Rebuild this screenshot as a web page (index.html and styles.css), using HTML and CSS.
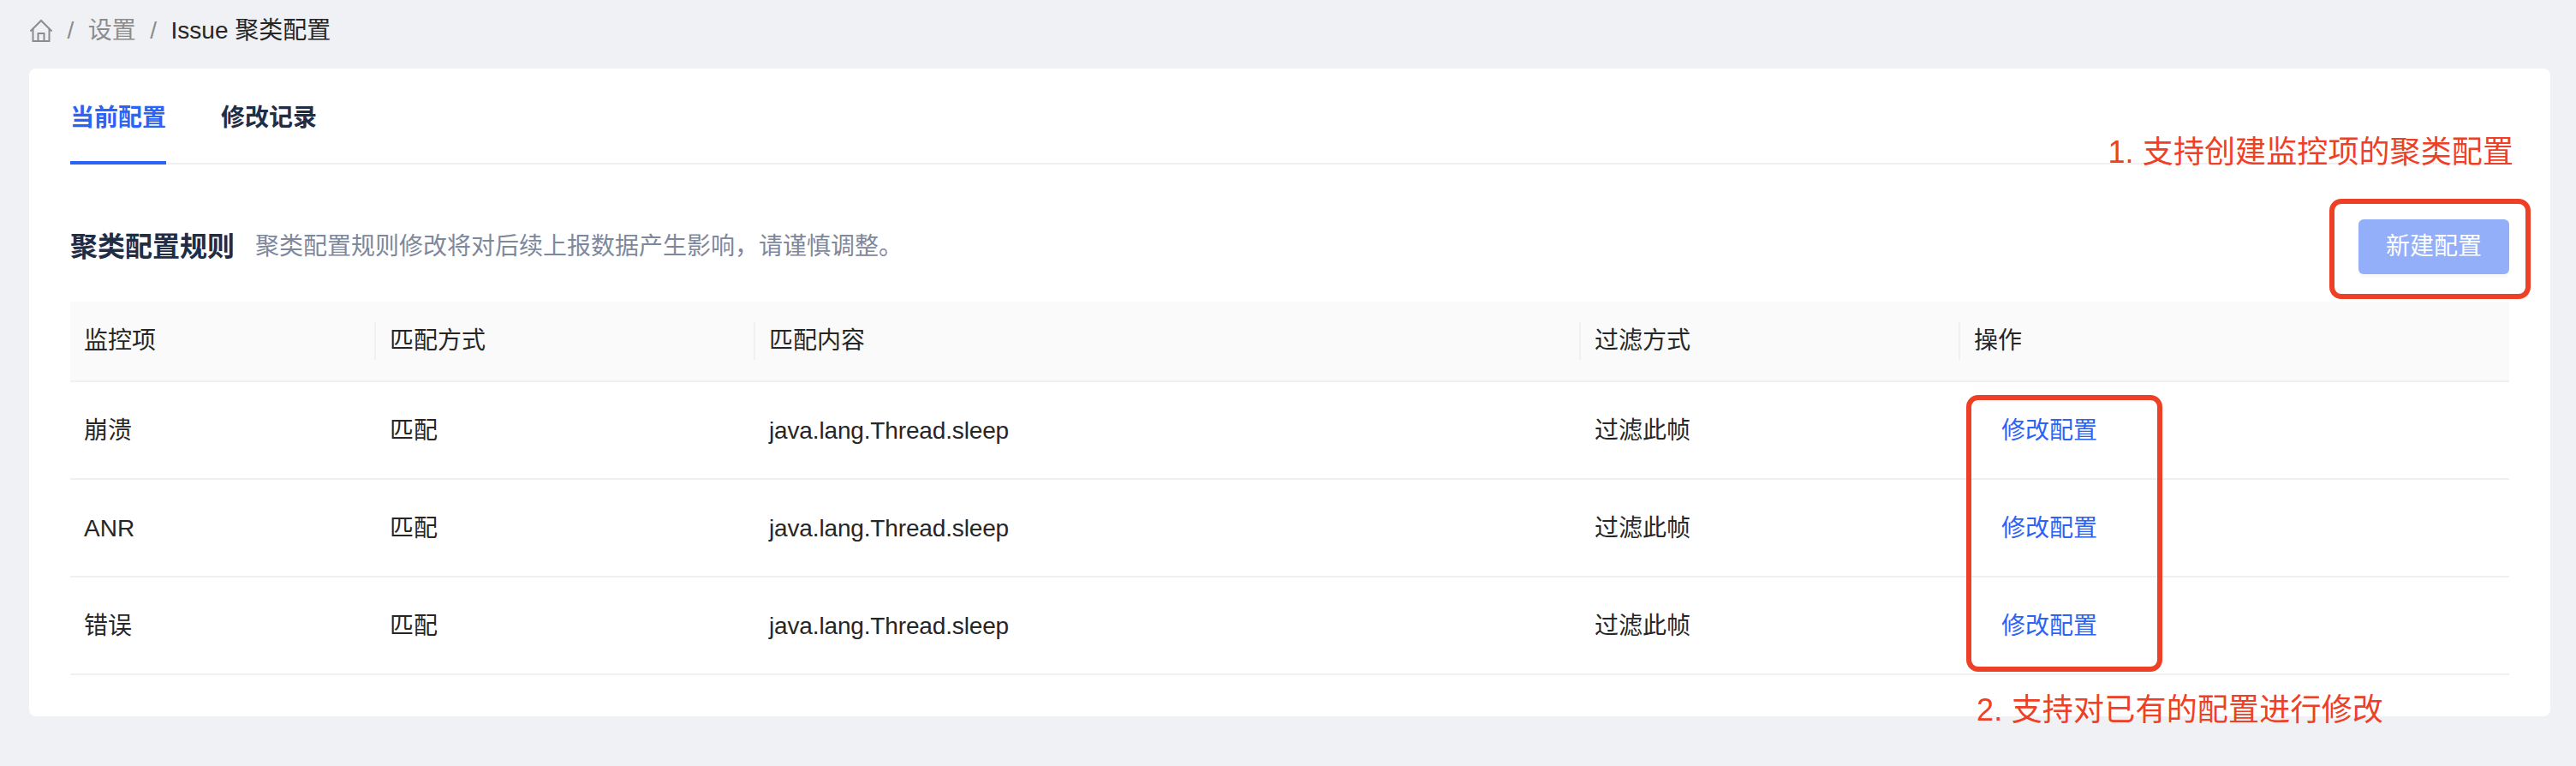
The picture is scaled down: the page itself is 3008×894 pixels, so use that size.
FILE: index.html
```html
<!DOCTYPE html>
<html lang="zh-CN">
<head>
    <meta charset="UTF-8">
    <meta name="viewport" content="width=device-width, initial-scale=1.0">
    <title>Issue 聚类配置</title>
    <link rel="stylesheet" href="styles.css">
</head>
<body>
    <div class="crumbs">
        <svg class="home" viewBox="0 0 28 28" fill="none" stroke="#8c8c8c" stroke-width="2">
            <path d="M1.5 14.5 14 2l12.5 12.5"/>
            <path d="M4.5 12v14h19V12"/>
            <path d="M10.5 26v-9h7v9"/>
        </svg>
        <span class="sep">/</span>
        <span class="crumb">设置</span>
        <span class="sep">/</span>
        <span class="crumb-now">Issue 聚类配置</span>
    </div>

    <div class="card">
        <div class="tabs">
            <div class="tab active">当前配置</div>
            <div class="tab">修改记录</div>
        </div>

        <div class="head">
            <div class="title">聚类配置规则</div>
            <div class="desc">聚类配置规则修改将对后续上报数据产生影响，请谨慎调整。</div>
            <button class="btn">新建配置</button>
        </div>

        <table class="list">
            <colgroup>
                <col class="c1"><col class="c2"><col class="c3"><col class="c4"><col class="c5">
            </colgroup>
            <thead>
                <tr>
                    <th>监控项</th>
                    <th>匹配方式</th>
                    <th>匹配内容</th>
                    <th>过滤方式</th>
                    <th>操作</th>
                </tr>
            </thead>
            <tbody>
                <tr>
                    <td>崩溃</td>
                    <td>匹配</td>
                    <td class="code">java.lang.Thread.sleep</td>
                    <td>过滤此帧</td>
                    <td><a class="link">修改配置</a></td>
                </tr>
                <tr>
                    <td>ANR</td>
                    <td>匹配</td>
                    <td class="code">java.lang.Thread.sleep</td>
                    <td>过滤此帧</td>
                    <td><a class="link">修改配置</a></td>
                </tr>
                <tr>
                    <td>错误</td>
                    <td>匹配</td>
                    <td class="code">java.lang.Thread.sleep</td>
                    <td>过滤此帧</td>
                    <td><a class="link">修改配置</a></td>
                </tr>
            </tbody>
        </table>
    </div>

    <!-- 标注 -->
    <div class="mark mark-btn"></div>
    <div class="mark mark-links"></div>
    <div class="note note-1">1. 支持创建监控项的聚类配置</div>
    <div class="note note-2">2. 支持对已有的配置进行修改</div>
</body>
</html>
```

FILE: styles.css
```css
* {
    margin: 0;
    padding: 0;
    box-sizing: border-box;
}

body {
    position: relative;
    height: 894px;
    padding: 0 30px 0 34px;
    overflow: hidden;
    background-color: #f0f1f5;
    font: 28px/44px "Liberation Sans", "Noto Sans CJK SC", sans-serif;
    color: #262626;
}

.crumbs {
    height: 80px;
    padding-bottom: 9px;
    display: flex;
    align-items: center;
}

.home {
    width: 28px;
    height: 28px;
}

.sep {
    margin: 0 16.5px;
    color: #8c8c8c;
}

.crumb {
    color: #8c8c8c;
}

.card {
    height: 756px;
    padding: 0 48px;
    background-color: #fff;
    border-radius: 8px;
}

.tabs {
    height: 112px;
    padding-top: 36px;
    display: flex;
    gap: 64px;
    border-bottom: 2px solid #f0f0f0;
}

.tab {
    height: 76px;
    font-weight: bold;
    color: #1f2d45;
}

.tab.active {
    color: #2a63f6;
    border-bottom: 4px solid #2a63f6;
}

.head {
    height: 160px;
    padding-top: 32px;
    display: flex;
    align-items: center;
}

.title {
    font-size: 32px;
    font-weight: bold;
    color: #1f2d45;
}

.desc {
    margin-left: 24px;
    color: #7e889c;
}

.btn {
    width: 176px;
    height: 64px;
    margin-left: auto;
    border: 0;
    border-radius: 6px;
    background-color: #94aff9;
    box-shadow: 0 4px 0 #fafafa;
    font: inherit;
    color: #fff;
}

.list {
    width: 100%;
    table-layout: fixed;
    border-collapse: separate;
    border-spacing: 0;
}

.c1 { width: 355px; }
.c2 { width: 443px; }
.c3 { width: 964px; }
.c4 { width: 443px; }

.list th {
    position: relative;
    height: 94px;
    padding-left: 18px;
    background-color: #fafafa;
    border-bottom: 2px solid #f0f0f0;
    font-weight: normal;
    text-align: left;
}

.list th + th::before {
    content: "";
    position: absolute;
    left: 0;
    top: 24px;
    width: 2px;
    height: 44px;
    background-color: #f0f0f0;
}

.list th:first-child,
.list td:first-child {
    padding-left: 16px;
}

.list td {
    height: 114px;
    padding-top: 2px;
    padding-left: 18px;
    border-bottom: 2px solid #f0f0f0;
}

.list .code {
    letter-spacing: -0.15px;
}

.link {
    margin-left: 32px;
    color: #2a63f6;
}

.mark {
    position: absolute;
    border: 6px solid #ee4026;
    border-radius: 14px;
}

.mark-btn {
    left: 2720px;
    top: 232px;
    width: 235px;
    height: 117px;
}

.mark-links {
    left: 2296px;
    top: 461px;
    width: 229px;
    height: 323px;
}

.note {
    position: absolute;
    font-size: 36px;
    line-height: 50px;
    letter-spacing: 0.1px;
    color: #ee4026;
    white-space: nowrap;
}

.note-1 {
    right: 73px;
    top: 153px;
}

.note-2 {
    left: 2308px;
    top: 804px;
    letter-spacing: 0.2px;
}
```
